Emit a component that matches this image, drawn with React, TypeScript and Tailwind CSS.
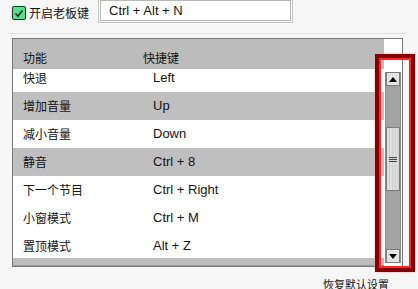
import React from "react";

const rows: { name: string; key: string; gray: boolean }[] = [
  { name: "快退", key: "Left", gray: false },
  { name: "增加音量", key: "Up", gray: true },
  { name: "减小音量", key: "Down", gray: false },
  { name: "静音", key: "Ctrl + 8", gray: true },
  { name: "下一个节目", key: "Ctrl + Right", gray: false },
  { name: "小窗模式", key: "Ctrl + M", gray: false },
  { name: "置顶模式", key: "Alt + Z", gray: false },
];

function Arrow({ up }: { up: boolean }) {
  return (
    <svg width="8" height="5" viewBox="0 0 8 5">
      {up ? <polygon points="0,5 8,5 4,0" fill="#000" /> : <polygon points="0,0 8,0 4,5" fill="#000" />}
    </svg>
  );
}

export default function App() {
  return (
    <div className="relative w-[418px] h-[289px] overflow-hidden bg-[#f6f6f6] text-[12px] text-[#141414] font-['Noto_Sans_CJK_SC',sans-serif]">
      {/* top row */}
      <div className="flex items-start h-[23px]">
        <div className="ml-[12px] mt-[6px] w-[14px] h-[14px] rounded-[2px] border border-[#1e3b28] bg-[#55e087] shadow-[0_0_2px_#8ef0b0] flex items-center justify-center">
          <svg width="10" height="9" viewBox="0 0 10 9">
            <polyline points="1.5,4.5 4,7 8.5,1.5" fill="none" stroke="#153020" strokeWidth="1.6" />
          </svg>
        </div>
        <div className="ml-[3px] mt-[4px] leading-[18px]">开启老板键</div>
        <div className="ml-[9px] -mt-[2px] w-[195px] h-[25px] border border-[#c4c4c4] p-[1px] bg-[#fbfbfb]">
          <div className="h-full border border-[#b8b8b8] bg-white flex items-center pl-[8px] pt-[1px] font-['Liberation_Sans',sans-serif] text-[13px]">
            Ctrl + Alt + N
          </div>
        </div>
      </div>
      {/* separator */}
      <div className="mt-[10px] ml-[8px] w-[398px] h-px bg-[#e3e3e3]" />
      {/* panel */}
      <div className="mt-[4px] ml-[12px] w-[391px] h-[229px] border border-[#787878] flex bg-white">
        <div className="flex-1 flex flex-col min-w-0">
          <div className="h-[30px] shrink-0 bg-[#bcbcbc] flex pt-[11px] leading-[16px]">
            <div className="w-[130px] pl-[10px]">功能</div>
            <div>快捷键</div>
          </div>
          <div className="flex-1 overflow-hidden">
            <div className="-mt-[5px]">
              {rows.map((r) => (
                <div
                  key={r.name}
                  className={`h-[28px] flex items-center ${r.gray ? "bg-[#bfbfbf]" : "bg-white"}`}
                >
                  <div className="w-[140px] pl-[10px]">{r.name}</div>
                  <div className="font-['Liberation_Sans',sans-serif] text-[13px]">{r.key}</div>
                </div>
              ))}
            </div>
          </div>
          <div className="h-[8px] shrink-0 bg-[#bdbdbd] border-b border-[#9a9a9a]" />
        </div>
        {/* vertical scrollbar */}
        <div className="w-[18px] shrink-0 bg-white flex flex-col pl-[1px] pt-[33px] pb-[3px]">
          <div className="w-[16px] flex-1 flex flex-col bg-[#a2a2a2] border-x border-[#8c8c8c]">
            <div className="h-[14px] shrink-0 bg-[#e4e4e4] border border-[#7c7c7c] flex items-center justify-center">
              <Arrow up />
            </div>
            <div className="h-[41px] shrink-0" />
            <div className="h-[64px] shrink-0 bg-[repeating-linear-gradient(90deg,#dedede_0px,#dedede_2px,#cfcfcf_2px,#cfcfcf_3px)] border border-[#7c7c7c] flex flex-col items-center justify-center gap-[1px]">
              <div className="w-[8px] h-px bg-[#444]" />
              <div className="w-[8px] h-px bg-[#444]" />
              <div className="w-[8px] h-px bg-[#444]" />
            </div>
            <div className="flex-1" />
            <div className="h-[14px] shrink-0 bg-[#e4e4e4] border border-[#7c7c7c] flex items-center justify-center">
              <Arrow up={false} />
            </div>
          </div>
        </div>
      </div>
      {/* bottom link */}
      <div className="mt-[10px] ml-[323px] text-[11px] leading-[14px]">恢复默认设置</div>
      {/* red annotation box */}
      <div className="absolute left-[375px] top-[54px] w-[40px] h-[218px] border-[4px] border-[#820000] shadow-[0_0_2px_#ff9a9a]">
        <div className="absolute inset-0 border-2 border-[#ff2424]" />
      </div>
    </div>
  );
}
